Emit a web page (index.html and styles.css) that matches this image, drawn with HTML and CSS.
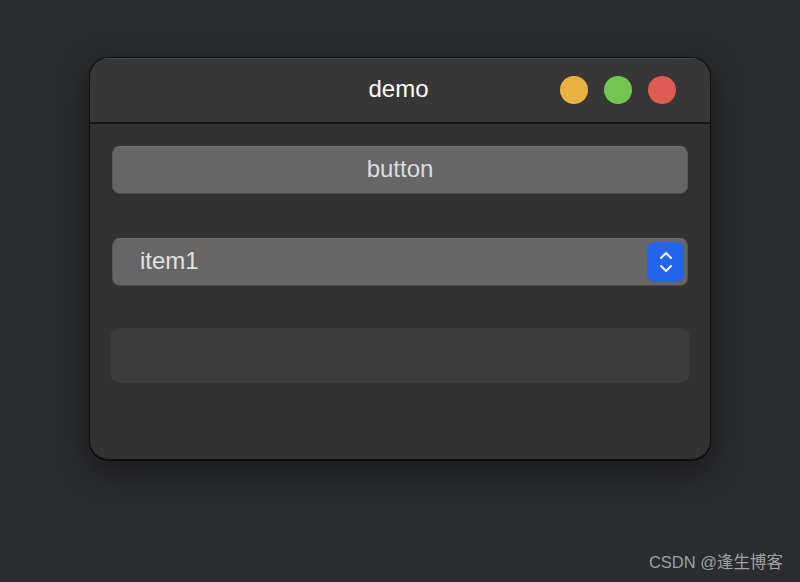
FILE: index.html
```html
<!DOCTYPE html>
<html lang="en">
<head>
  <meta charset="UTF-8" />
  <title>demo</title>
  <link rel="stylesheet" href="styles.css">
</head>
<body>

  <div class="window">
    <div class="titlebar">
      <span></span>
      <span class="title">demo</span>
      <div class="lights">
        <span class="light yellow"></span>
        <span class="light green"></span>
        <span class="light red"></span>
      </div>
    </div>

    <div class="content">
      <div class="button">button</div>

      <div class="select">
        <span class="select-text">item1</span>
        <span class="stepper">
          <svg width="16" height="24" viewBox="0 0 16 24">
            <path d="M3 8 L8 3 L13 8 M3 16 L8 21 L13 16" fill="none" stroke="#fff" stroke-width="2" stroke-linecap="round" stroke-linejoin="round"/>
          </svg>
        </span>
      </div>

      <div class="field"></div>
    </div>
  </div>

  <div class="watermark">CSDN @逢生博客</div>

</body>
</html>
```

FILE: styles.css
```css
body {
  margin: 0;
  height: 582px;
  background: #2b2c30;
  padding: 57px 0 0 89px;
  box-sizing: border-box;
  font-family: "Liberation Sans", Arial, sans-serif;
  overflow: hidden;
}

.window {
  width: 622px;
  height: 404px;
  box-sizing: border-box;
  border: 1px solid #0c0c0c;
  border-bottom-width: 2px;
  border-radius: 20px;
  background: #323232;
  overflow: hidden;
  box-shadow: 0 10px 34px rgba(0, 0, 0, 0.45);
}

.titlebar {
  height: 64px;
  display: grid;
  grid-template-columns: 1fr auto 1fr;
  align-items: center;
  background: #373737;
  border-bottom: 2px solid #141414;
  box-shadow: inset 0 1px 0 #4a4a4a;
}

.title {
  color: #fff;
  font-size: 24px;
  padding-bottom: 3px;
  margin-right: 3px;
}

.lights {
  display: flex;
  justify-content: flex-end;
  gap: 16px;
  padding-right: 34px;
}

.light {
  width: 28px;
  height: 28px;
  border-radius: 50%;
}

.yellow { background: #e9b042; }
.green { background: #72c54e; }
.red { background: #dc5c51; }

.content {
  display: flex;
  flex-direction: column;
  padding: 22px 22px 0;
}

.button {
  height: 48px;
  box-sizing: border-box;
  background: #666;
  border: 1px solid #5a5a5a;
  border-top-color: #727272;
  border-bottom-color: #4a4a4a;
  border-radius: 8px;
  color: #dcdcdc;
  font-size: 24px;
  padding-bottom: 3px;
  display: flex;
  align-items: center;
  justify-content: center;
}

.select {
  margin-top: 44px;
  height: 48px;
  box-sizing: border-box;
  background: #666;
  border: 1px solid #555;
  border-top-color: #6e6e6e;
  border-bottom-color: #4a4a4a;
  border-radius: 8px;
  display: flex;
  align-items: center;
  justify-content: space-between;
  padding: 0 3px 0 27px;
}

.select-text {
  color: #e2e2e2;
  font-size: 24px;
  padding-bottom: 3px;
}

.stepper {
  width: 37px;
  height: 40px;
  border-radius: 8px;
  background: #2464ea;
  display: flex;
  align-items: center;
  justify-content: center;
}

.field {
  margin: 42px -2px 0;
  height: 55px;
  border-radius: 10px;
  background: #3c3c3c;
}

.watermark {
  position: absolute;
  right: 17px;
  bottom: 9px;
  color: #a0a0a0;
  font-size: 16.5px;
  font-family: "Liberation Sans", "Noto Sans CJK SC", sans-serif;
}
```
